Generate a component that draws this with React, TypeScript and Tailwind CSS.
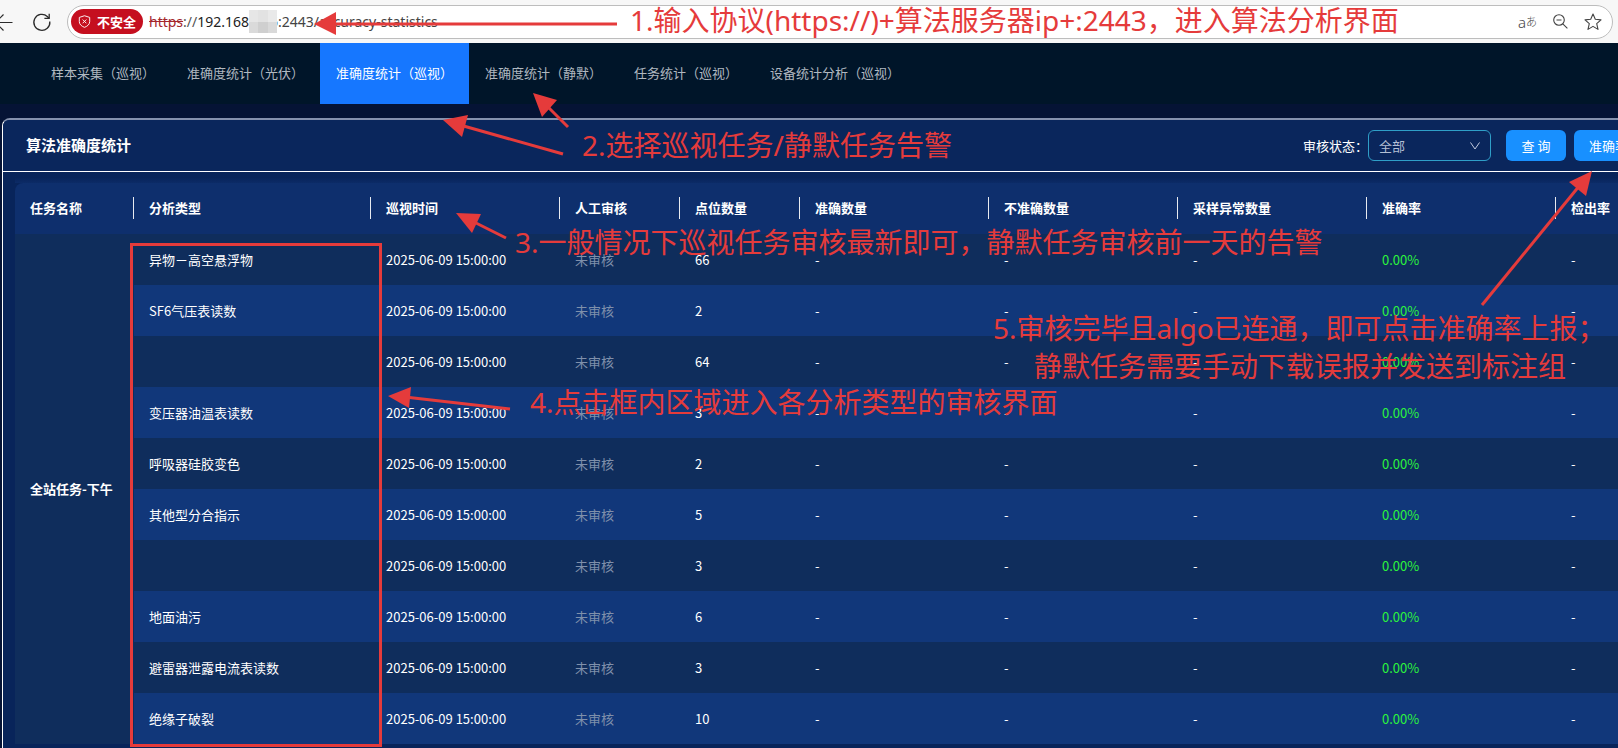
import { useState } from "react";

const navItems = [
  "样本采集（巡视）",
  "准确度统计（光伏）",
  "准确度统计（巡视）",
  "准确度统计（静默）",
  "任务统计（巡视）",
  "设备统计分析（巡视）",
];

const columns = [
  { label: "任务名称", width: "w-[119px]" },
  { label: "分析类型", width: "w-[237px]" },
  { label: "巡视时间", width: "w-[189px]" },
  { label: "人工审核", width: "w-[120px]" },
  { label: "点位数量", width: "w-[120px]" },
  { label: "准确数量", width: "w-[189px]" },
  { label: "不准确数量", width: "w-[189px]" },
  { label: "采样异常数量", width: "w-[189px]" },
  { label: "准确率", width: "w-[189px]" },
  { label: "检出率", width: "" },
];

const rows = [
  { type: "异物－高空悬浮物", count: 66 },
  { type: "SF6气压表读数", count: 2 },
  { type: "", count: 64 },
  { type: "变压器油温表读数", count: 3 },
  { type: "呼吸器硅胶变色", count: 2 },
  { type: "其他型分合指示", count: 5 },
  { type: "", count: 3 },
  { type: "地面油污", count: 6 },
  { type: "避雷器泄露电流表读数", count: 3 },
  { type: "绝缘子破裂", count: 10 },
];

const notes = [
  {
    text: "1.输入协议(https://)+算法服务器ip+:2443，进入算法分析界面",
    pos: "left-[630px] top-[1px]",
  },
  { text: "2.选择巡视任务/静默任务告警", pos: "left-[582px] top-[126px]" },
  {
    text: "3.一般情况下巡视任务审核最新即可，静默任务审核前一天的告警",
    pos: "left-[515px] top-[223px]",
  },
  {
    text: "4.点击框内区域进入各分析类型的审核界面",
    pos: "left-[530px] top-[383px]",
  },
  {
    text: "5.审核完毕且algo已连通，即可点击准确率上报；",
    pos: "left-[993px] top-[309px]",
  },
  {
    text: "静默任务需要手动下载误报并发送到标注组",
    pos: "left-[1034px] top-[347px]",
  },
];

const arrows = [
  { line: "M617 24H330", head: "M314 24L336 12V35Z" },
  { line: "M568 127L546 105", head: "M533 93L557 100L542 117Z" },
  { line: "M563 154L460 125", head: "M443 120L468 115L462 137Z" },
  { line: "M506 238L472 221", head: "M456 213L481 214L472 233Z" },
  { line: "M510 409L405 397", head: "M388 396L411 387L409 408Z" },
  { line: "M1482 305L1580 185", head: "M1592 171L1569 182L1586 196Z" },
];

function BrowserBar() {
  return (
    <header className="flex h-[43px] items-center bg-[#f7f7f7] pr-[5px]">
      <button aria-label="返回" className="-ml-2 text-[#2b2b2b]">
        <svg width="22" height="18" viewBox="0 0 22 18" fill="none" stroke="currentColor" strokeWidth="1.200">
          <path d="M20.500 9.500H4M11.500 1.500 3.500 9.500l8 8" />
        </svg>
      </button>
      <button aria-label="刷新" className="ml-[18px] text-[#2b2b2b]">
        <svg width="20" height="20" viewBox="0 0 20 20" fill="none" stroke="currentColor" strokeWidth="1.300">
          <path d="M17.800 9.500A8 8 0 1 1 15.300 4.500L17 6.200" />
          <path d="M17.200 1.800V6.400H12.400" />
        </svg>
      </button>
      <div className="ml-[15px] flex h-[34px] flex-1 items-center rounded-full border border-[#bdbdbd] bg-white pl-[3px] pr-[10px]">
        <span className="flex h-[25px] w-[72px] items-center justify-center gap-[6px] rounded-full bg-[#c50f1f] text-[13px] font-bold text-white">
          <svg width="13" height="13" viewBox="0 0 14 14" fill="none" stroke="currentColor">
            <path d="M7 .8 12.600 2.600V7c0 3-2.200 5-5.600 6.300C3.600 12 1.400 10 1.400 7V2.600Z" />
            <path d="m5 4.900 4 4m0-4-4 4" />
          </svg>
          不安全
        </span>
        <div className="ml-[6px] flex flex-1 items-center font-['Noto_Sans','Noto_Sans_CJK_SC',sans-serif] text-sm text-[#222]">
          <span className="text-[#a4262c] line-through">https</span>
          <span className="text-[#555]">://</span>
          <span>192.168</span>
          <span className="relative z-10 -mr-[7px] grid h-[23px] w-7 grid-cols-3">
            <span className="bg-[#e6e6e6]" />
            <span className="bg-[#e2e2e2]" />
            <span className="bg-[#e9e9e9]" />
            <span className="bg-[#dadada]" />
            <span className="bg-[#cfcfcf]" />
            <span className="bg-[#d9d9d9]" />
          </span>
          <input
            aria-label="地址"
            defaultValue="6:2443/accuracy-statistics"
            className="min-w-0 flex-1 bg-transparent text-[#444] outline-none"
          />
        </div>
        <div className="flex items-center gap-4 text-[#444]">
          <button
            aria-label="翻译"
            className="flex items-center font-['Noto_Sans','Noto_Sans_CJK_SC',sans-serif] font-light leading-5"
          >
            <span className="text-[15px]">a</span>
            <span className="text-[11px]">あ</span>
          </button>
          <button aria-label="缩小">
            <svg width="15" height="15" viewBox="0 0 15 15" fill="none" stroke="currentColor" strokeWidth="1.100">
              <circle cx="6" cy="6" r="5.300" />
              <path d="M3.500 6h5M9.800 9.800l4.600 4.600" />
            </svg>
          </button>
          <button aria-label="收藏">
            <svg width="18" height="18" viewBox="0 0 18 18" fill="none" stroke="currentColor" strokeWidth="1.100" strokeLinejoin="round">
              <path d="M9 1 11.300 6.300 17 6.900 12.700 10.700 14 16.400 9 13.400 4 16.400 5.300 10.700 1 6.900 6.700 6.300Z" />
            </svg>
          </button>
        </div>
      </div>
    </header>
  );
}

function NavTabs() {
  const [active, setActive] = useState(2);

  return (
    <nav className="flex h-[61px] shrink-0 bg-[#001529] pl-[35px]">
      {navItems.map((item, i) => (
        <a
          key={item}
          href="#"
          onClick={() => setActive(i)}
          className={`flex items-center whitespace-nowrap px-4 pb-0.5 ${
            active === i ? "bg-[#1677ff] text-white" : "text-[#b0b8c0]"
          }`}
        >
          {item}
        </a>
      ))}
    </nav>
  );
}

function PanelHeader() {
  return (
    <div className="flex h-[52px] items-center rounded-tl-md border-b border-white bg-[#0a265c] pl-[23px] pr-[29px]">
      <h1 className="pb-0.5 text-[15px] font-bold">算法准确度统计</h1>
      <label htmlFor="status" className="ml-auto">
        审核状态：
      </label>
      <div className="relative">
        <select
          id="status"
          className="h-[31px] w-[123px] appearance-none rounded-md border border-[#2f9fc8] bg-transparent pl-[10px] text-[#b3bfd4]"
        >
          <option>全部</option>
        </select>
        <svg
          width="10"
          height="8"
          viewBox="0 0 10 8"
          fill="none"
          stroke="currentColor"
          className="pointer-events-none absolute right-[11px] top-3 text-[#c3cce0]"
        >
          <path d="M.5.5 5 7 9.500.5" />
        </svg>
      </div>
      <button className="ml-[15px] h-[31px] w-[60px] rounded-md bg-[#1890ff]">
        查 询
      </button>
      <button className="ml-2 h-[31px] rounded-md bg-[#1890ff] px-[15px]">
        准确率上报
      </button>
    </div>
  );
}

function StatsTable() {
  return (
    <table className="w-full table-fixed border-separate border-spacing-0 text-left">
      <thead>
        <tr className="bg-[#0e2f6d]">
          {columns.map((col, i) => (
            <th
              key={col.label}
              className={`h-[51px] p-0 pl-[15px] font-bold ${col.width} ${
                i === 0 ? "rounded-tl-lg" : ""
              }`}
            >
              <div className="flex items-center justify-between pb-0.5">
                {col.label}
                {i < columns.length - 1 && (
                  <span className="h-[22px] w-px bg-white/90" />
                )}
              </div>
            </th>
          ))}
        </tr>
      </thead>
      <tbody>
        {rows.map((row, i) => (
          <tr
            key={i}
            className={`*:h-[51px] *:p-0 *:pl-[15px] ${
              i % 2 ? "bg-[#11377a]" : "bg-[#0f2d5c]"
            }`}
          >
            {i === 0 && (
              <th rowSpan={rows.length} className="bg-[#0f2d5c] font-bold">
                全站任务-下午
              </th>
            )}
            <td>{row.type}</td>
            <td>2025-06-09 15:00:00</td>
            <td className="text-[#7f90ab]">未审核</td>
            <td>{row.count}</td>
            <td>-</td>
            <td>-</td>
            <td>-</td>
            <td className="text-[#2cf53c]">0.00%</td>
            <td>-</td>
          </tr>
        ))}
      </tbody>
    </table>
  );
}

function Annotations() {
  return (
    <div className="pointer-events-none absolute inset-0 z-20 text-[#e53b3b]">
      <svg width="1618" height="748" className="absolute left-0 top-0 max-w-none">
        {arrows.map((a) => (
          <g key={a.line}>
            <path d={a.line} stroke="currentColor" strokeWidth="3" />
            <path d={a.head} fill="currentColor" />
          </g>
        ))}
      </svg>
      <div className="absolute left-[130px] top-[243px] h-[504px] w-[252px] border-[3px] border-current" />
      {notes.map((n) => (
        <p
          key={n.text}
          className={`absolute whitespace-nowrap font-['Noto_Sans','Noto_Sans_CJK_SC',sans-serif] text-[28px] leading-[38px] ${n.pos}`}
        >
          {n.text}
        </p>
      ))}
    </div>
  );
}

export default function App() {
  return (
    <div
      lang="zh-CN"
      className="relative flex min-h-screen flex-col overflow-hidden bg-[#051335] font-['Noto_Sans_CJK_SC',sans-serif] text-[13px] leading-5 text-white"
    >
      <BrowserBar />
      <NavTabs />
      <main className="-mr-20 ml-[2px] mt-[14px] flex-1 rounded-tl-lg border-l border-t-2 border-l-white border-t-[#8591ad] bg-[#08245a]">
        <PanelHeader />
        <div className="pb-1 pl-3">
          <div className="h-[11px] bg-linear-to-b from-[#08245a] from-50% to-[#0c2b67]" />
          <StatsTable />
        </div>
      </main>
      <Annotations />
    </div>
  );
}
